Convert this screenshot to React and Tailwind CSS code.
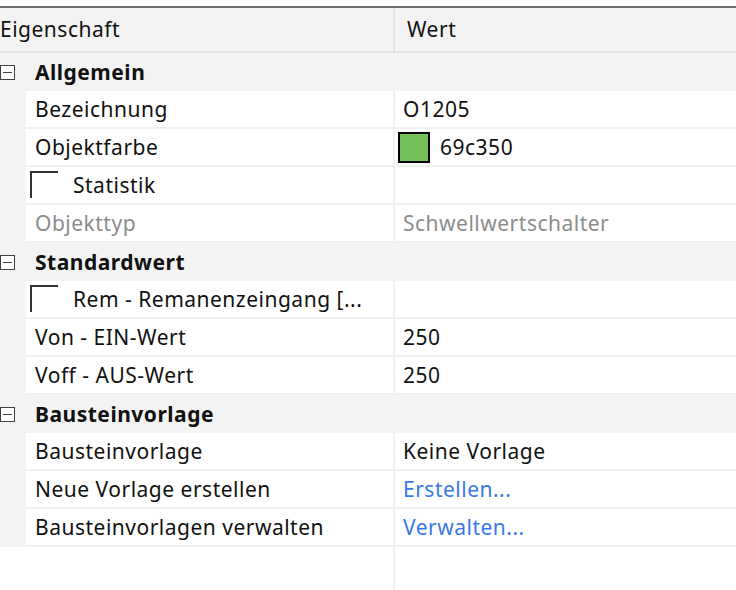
import React from 'react';

const font = { fontFamily: '"Noto Sans", "Open Sans", sans-serif' };

const groups = [
  {
    title: 'Allgemein',
    rows: [
      { label: 'Bezeichnung', value: 'O1205' },
      { label: 'Objektfarbe', value: '69c350', swatch: '#76c05a' },
      { label: 'Statistik', check: true },
      { label: 'Objekttyp', value: 'Schwellwertschalter', muted: true },
    ],
  },
  {
    title: 'Standardwert',
    rows: [
      { label: 'Rem - Remanenzeingang [...', check: true },
      { label: 'Von - EIN-Wert', value: '250' },
      { label: 'Voff - AUS-Wert', value: '250' },
    ],
  },
  {
    title: 'Bausteinvorlage',
    rows: [
      { label: 'Bausteinvorlage', value: 'Keine Vorlage' },
      { label: 'Neue Vorlage erstellen', value: 'Erstellen...', link: true },
      { label: 'Bausteinvorlagen verwalten', value: 'Verwalten...', link: true },
    ],
  },
];

const Expander = () => (
  <span className="flex h-[15px] w-[15px] items-center justify-center border border-[#404040] bg-white">
    <span className="h-px w-[9px] bg-[#404040]" />
  </span>
);

const Row = ({ row }) => (
  <div className="flex h-[38px] bg-[#f3f3f3] pl-[26px]">
    <div className="flex flex-1 border-b-2 border-[#f0f0f0] bg-white">
      <div className="flex w-[369px] shrink-0 items-center border-r-2 border-[#f0f0f0]">
        {row.check ? (
          <>
            <span className="ml-[4px] mt-[4px] h-[27px] w-[28px] self-start border-l-2 border-t-2 border-[#333]" />
            <span className="ml-[15px] text-[#111]">{row.label}</span>
          </>
        ) : (
          <span className={`pl-[9px] ${row.muted ? 'text-[#8c8c8c]' : 'text-[#111]'}`}>{row.label}</span>
        )}
      </div>
      <div className={`flex flex-1 items-center ${row.swatch ? 'pl-[3px]' : 'pl-[8px]'}`}>
        {row.swatch && (
          <span className="mr-[10px] h-[31px] w-[32px] border-2 border-black" style={{ backgroundColor: row.swatch }} />
        )}
        <span className={row.link ? 'text-[#3b78e7]' : row.muted ? 'text-[#8c8c8c]' : 'text-[#111]'}>
          {row.value}
        </span>
      </div>
    </div>
  </div>
);

export default function App() {
  return (
    <div
      className="h-[590px] w-[736px] overflow-hidden bg-white text-[21px] leading-none tracking-[0.5px]"
      style={font}
    >
      <div className="h-[6px]" />
      <div className="h-[2px] bg-[#6d6d6d]" />
      {/* header */}
      <div className="flex h-[45px] border-b-2 border-[#e3e3e3] bg-[#f3f3f3]">
        <div className="flex w-[395px] shrink-0 items-center border-r-2 border-[#e3e3e3] text-[#111]">
          Eigenschaft
        </div>
        <div className="flex flex-1 items-center pl-[12px] text-[#111]">Wert</div>
      </div>

      {groups.map((g) => (
        <div key={g.title}>
          <div className="flex h-[38px] items-center bg-[#f3f3f3]">
            <Expander />
            <span className="ml-[20px] font-bold text-[#111]">{g.title}</span>
          </div>
          {g.rows.map((r) => (
            <Row key={r.label} row={r} />
          ))}
        </div>
      ))}

      <div className="flex h-[60px]">
        <div className="w-[395px] shrink-0 border-r-2 border-[#f0f0f0]" />
      </div>
    </div>
  );
}
